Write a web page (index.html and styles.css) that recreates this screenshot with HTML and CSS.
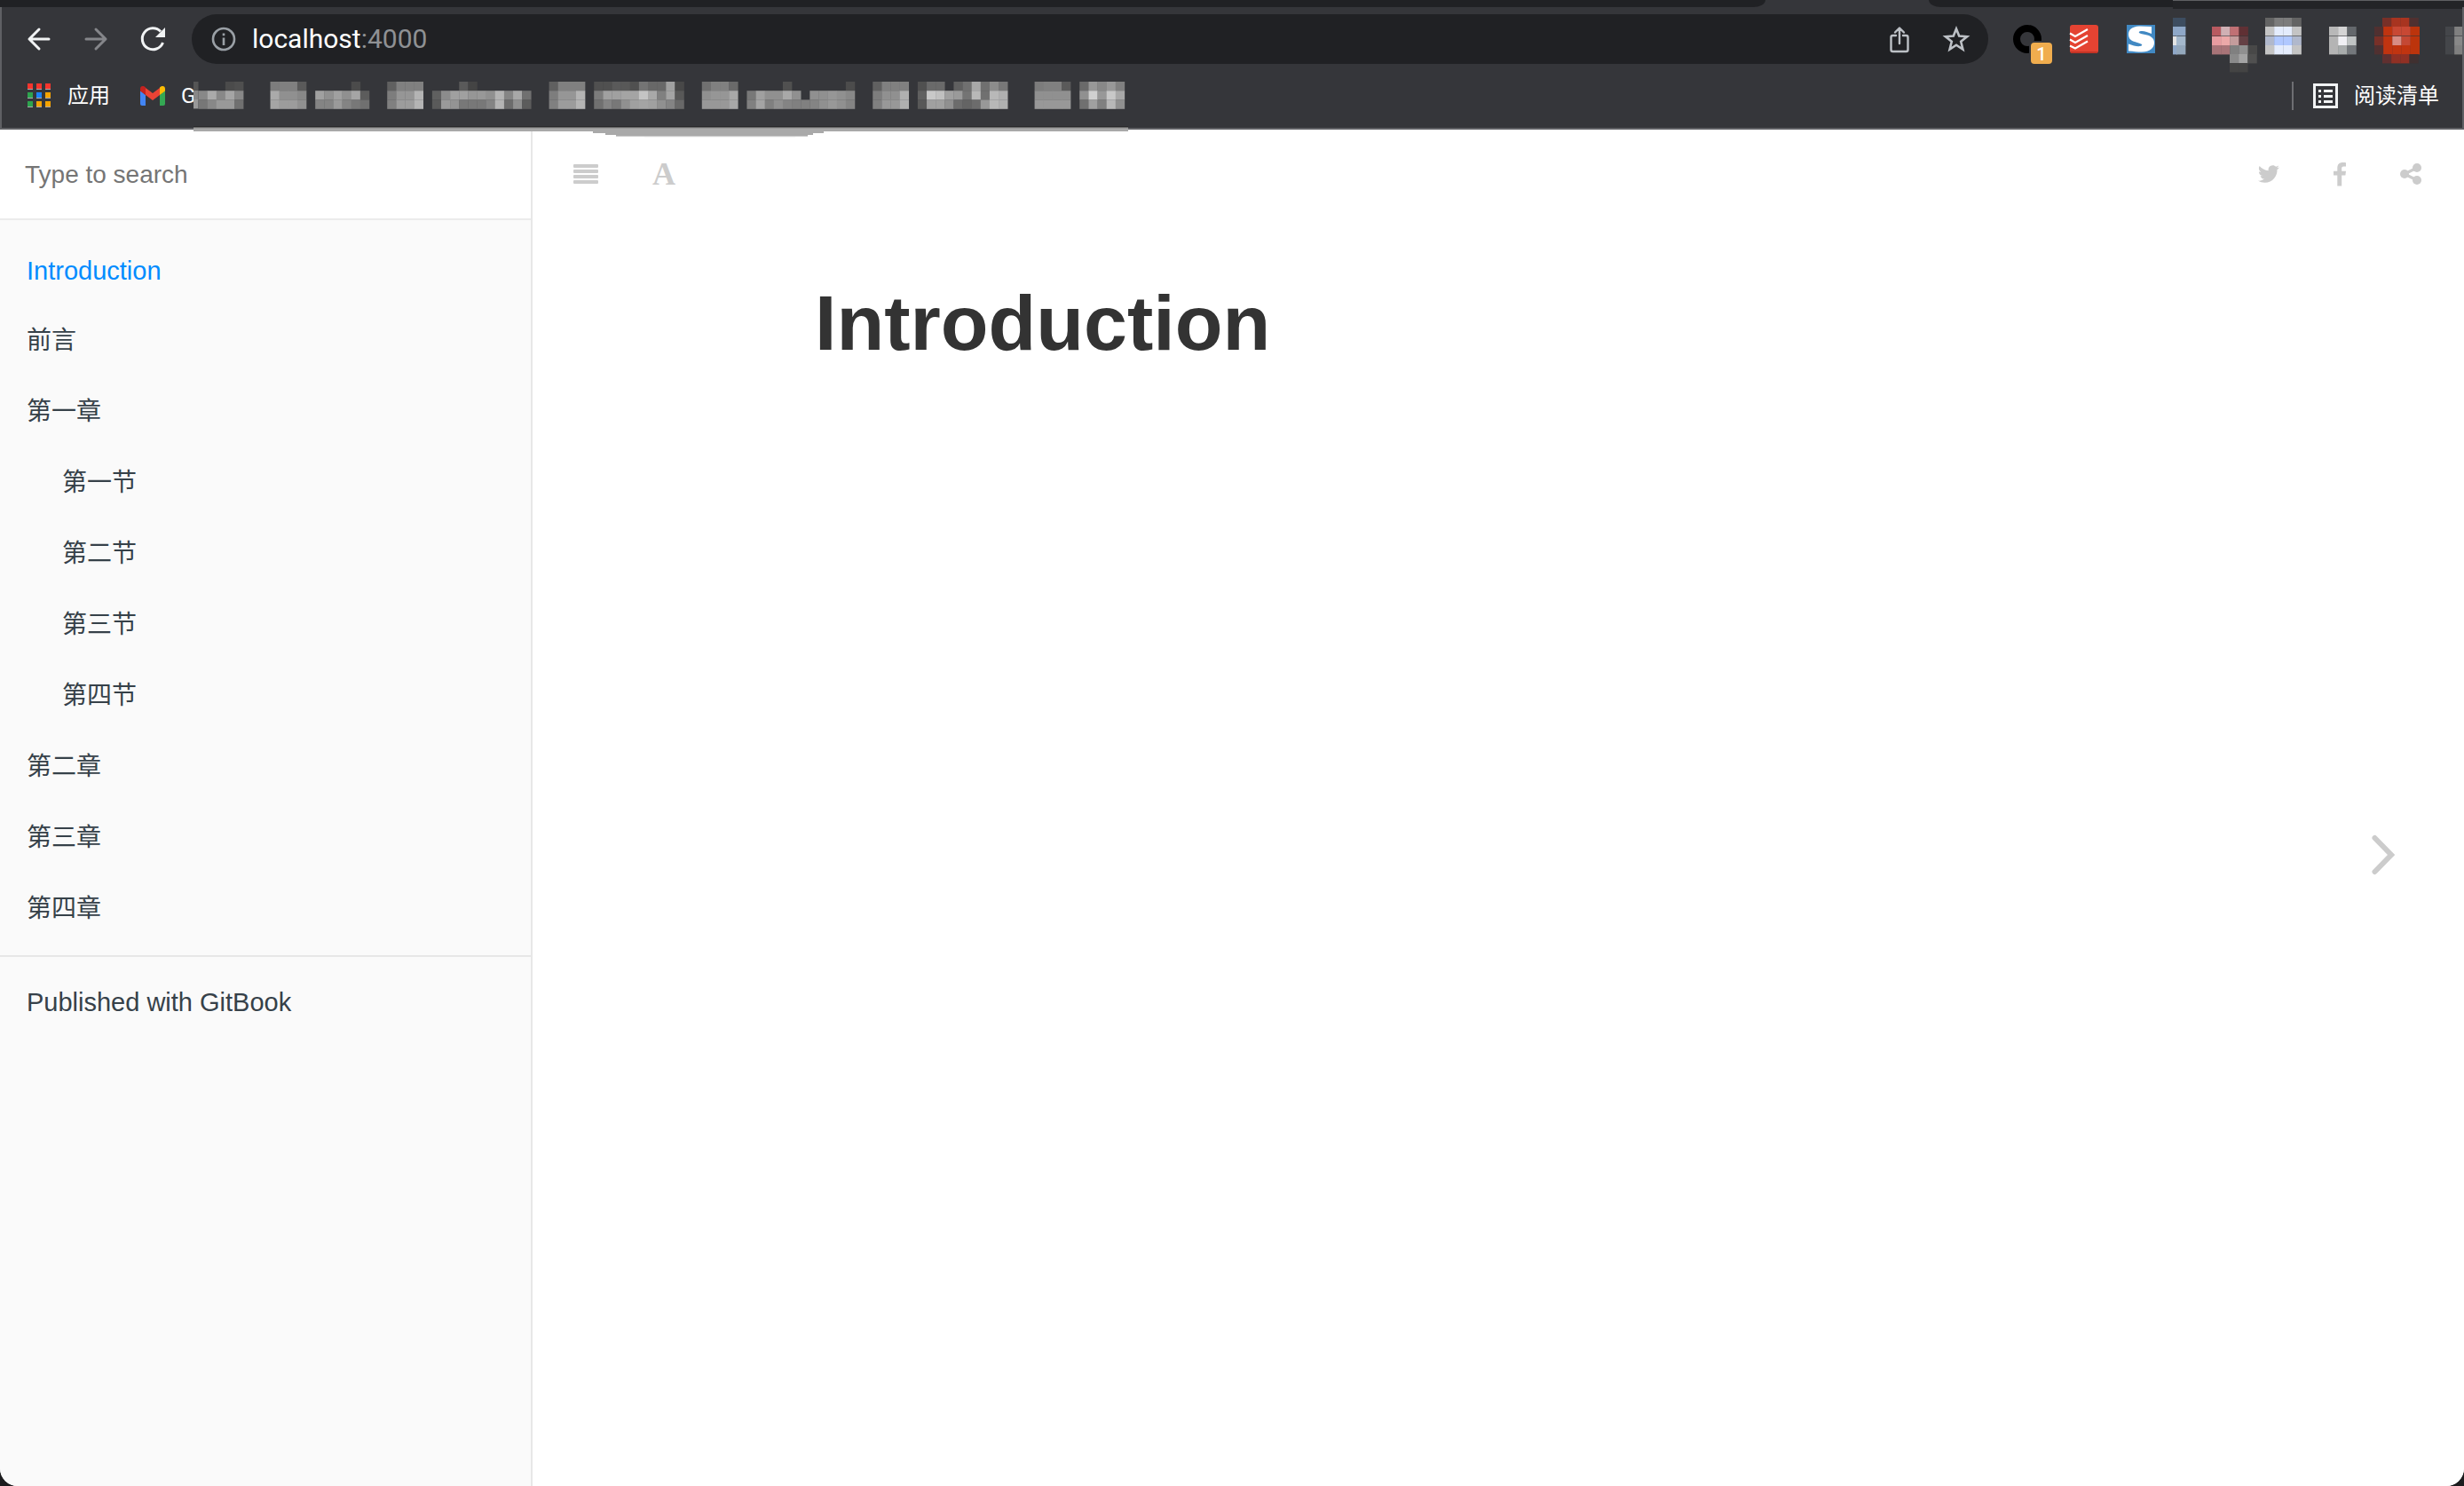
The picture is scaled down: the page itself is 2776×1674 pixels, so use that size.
FILE: index.html
```html
<!DOCTYPE html>
<html lang="zh-CN">
<head>
<meta charset="utf-8">
<meta name="viewport" content="width=device-width, initial-scale=1">
<title>Introduction</title>
<link rel="stylesheet" href="styles.css">
</head>
<body>
<div class="window">
  <header class="browser">
    <div class="tabstrip">
      <div class="tabs-left"></div>
      <div class="tabs-right"><div class="tabs-tail"></div></div>
    </div>
    <div class="chrome">
      <div class="toolbar">
        <button class="tool" aria-label="Back"><svg width="64" height="56" viewBox="0 0 64 56" fill="none" stroke="#f1f3f4" stroke-width="3" stroke-linecap="round" stroke-linejoin="round"><path d="M43 28H21M32 17L21 28l11 11"/></svg></button>
        <button class="tool" aria-label="Forward"><svg width="64" height="56" viewBox="0 0 64 56" fill="none" stroke="#85868a" stroke-width="3" stroke-linecap="round" stroke-linejoin="round"><path d="M21 28h22M32 17l11 11-11 11"/></svg></button>
        <button class="tool" aria-label="Reload"><svg width="64" height="56" viewBox="0 0 64 56"><path d="M43.500 32A12 12 0 1 1 41 19.500" fill="none" stroke="#f1f3f4" stroke-width="3"/><path d="M46 15v11H35z" fill="#f1f3f4"/></svg></button>
        <div class="omnibox">
          <svg class="info" width="28" height="28" viewBox="0 0 28 28"><circle cx="14" cy="14" r="12" fill="none" stroke="#9aa0a6" stroke-width="2.600"/><path d="M12.700 12.500h2.600v8.500h-2.600zM12.700 7.500h2.600v2.800h-2.600z" fill="#9aa0a6"/></svg>
          <a class="url" href="#">localhost<span class="port">:4000</span></a>
          <button class="tool" aria-label="Share"><svg width="64" height="56" viewBox="0 0 64 56" fill="none" stroke="#bdc1c6" stroke-width="2.400" stroke-linecap="round" stroke-linejoin="round"><path d="M28 24h-3.500a2 2 0 0 0-2 2v14a2 2 0 0 0 2 2h15a2 2 0 0 0 2-2V26a2 2 0 0 0-2-2H36M32 33V16M27 20.500L32 15.500l5 5"/></svg></button>
          <button class="tool" aria-label="Bookmark this page"><svg width="64" height="56" viewBox="0 0 64 56" fill="none" stroke="#bdc1c6" stroke-width="2.600"><path d="M32 16.500l3.200 8.100 8.900.6-6.900 5.600 2.200 8.700L32 34.700l-7.400 4.800 2.200-8.700-6.900-5.600 8.900-.6z"/></svg></button>
        </div>
        <div class="extensions">
          <button class="tool ring" aria-label="Extension, 1 notification"><svg width="64" height="56" viewBox="0 0 64 56"><circle cx="32" cy="28" r="12" fill="none" stroke="#000" stroke-width="8"/><path d="M34 30h16v18H34z" fill="#35363a"/></svg><span class="badge">1</span></button>
          <button class="tool" aria-label="Todoist"><svg width="64" height="56" viewBox="0 0 64 56"><rect x="16" y="12" width="32" height="32" rx="3" fill="#e44332"/><path d="M17 43h30" stroke="#c23325" stroke-width="2"/><path d="M16 21.500l6 3.500 14-8M16 28.500l6 3.500 14-8M16 35.500l6 3 14-8" fill="none" stroke="#fff" stroke-width="2.200"/></svg></button>
          <button class="tool" aria-label="S extension"><svg width="64" height="56" viewBox="0 0 64 56"><rect x="16" y="12" width="32" height="32" fill="#4189c3"/><path d="M44 14v8c-4-2-9-3.500-12-3-3 .500-3 2 0 3l7 1.500c5 1.500 8 4 8 8.500 0 6-5 10.500-14 10.500-5 0-9-.5-15-1v-8c5 2 10 3 13 2.500 3-.500 3-2 0-3l-6-2c-5-1.500-7-4-7-8.500 0-5 4-8.500 12-9z" fill="#fff"/></svg></button>
        </div>
        <svg class="ext-mosaic" width="326" height="68" viewBox="2448 16 326 68" aria-hidden="true"></svg>
      </div>
      <nav class="bookmarks" aria-label="Bookmarks">
        <a class="bookmark apps" href="#"><svg width="26" height="28" viewBox="0 0 26 28"><path d="M0 6h6v1H0zM10 6h6v1h-6zM20 6h6v1h-6zM0 16h6v1H0zM10 16h6v1h-6zM20 16h6v1h-6zM0 26h6v1H0zM10 26h6v1h-6zM20 26h6v1h-6z" fill="#aaa"/><path d="M0 0h6v6H0zM10 0h6v6h-6zM20 0h6v6h-6z" fill="#f7352d"/><path d="M0 10h6v6H0zM0 20h6v6H0z" fill="#2da44e"/><path d="M10 10h6v6h-6z" fill="#1a82f7"/><path d="M20 10h6v6h-6zM10 20h6v6h-6zM20 20h6v6h-6z" fill="#f4a300"/></svg>应用</a>
        <a class="bookmark gmail" href="#"><svg width="28" height="22" viewBox="0 0 28 22"><path d="M0 5l6 5v12H2a2 2 0 0 1-2-2z" fill="#4285f4"/><path d="M28 5l-6 5v12h4a2 2 0 0 0 2-2z" fill="#34a853"/><path d="M6 2l8 6 8-6v8l-8 6-8-6z" fill="#ea4335"/><path d="M0 3C0 0 3-1 6 1.500V10L0 5.500z" fill="#c5221f"/><path d="M28 3c0-3-3-4-6-1.500V10l6-4.500z" fill="#fbbc04"/></svg><span class="initial">G</span></a>
        <svg class="mosaic" width="1053" height="32" viewBox="218 92 1053 32" aria-hidden="true"></svg>
        <a class="bookmark reading" href="#"><svg width="28" height="28" viewBox="0 0 28 28"><rect x="1.500" y="1.500" width="25" height="25" fill="none" stroke="#f1f3f4" stroke-width="3"/><path d="M6 7h3v3H6zM12 7h10v3H12zM6 13h3v3H6zM12 13h10v3H12zM6 19h3v3H6zM12 19h10v3H12z" fill="#f1f3f4"/></svg>阅读清单</a>
      </nav>
      <svg class="smudge" width="1053" height="14" viewBox="218 142 1053 14" aria-hidden="true"><path d="M218 142h1053v1H218z" fill="#29292b"/><path d="M218 143h1053v1H218z" fill="#666"/><path d="M218 144h1053v2H218z" fill="#999"/><path d="M218 145h1053v3H928v2h-12v2h-6v1H694v-1h-12v-2h-14v-2H218z" fill="#a9a9a9"/><path d="M694 153h216v1H694z" fill="#ccc"/><path d="M726 154h170v1H726z" fill="#f4f4f4"/></svg>
    </div>
  </header>
  <div class="book">
    <aside class="sidebar">
      <input class="search" type="search" placeholder="Type to search" aria-label="Type to search">
      <nav aria-label="Summary">
        <ul class="summary">
          <li><a class="latin active" href="#">Introduction</a></li>
          <li><a href="#">前言</a></li>
          <li><a href="#">第一章</a>
            <ul>
              <li><a href="#">第一节</a></li>
              <li><a href="#">第二节</a></li>
              <li><a href="#">第三节</a></li>
              <li><a href="#">第四节</a></li>
            </ul>
          </li>
          <li><a href="#">第二章</a></li>
          <li><a href="#">第三章</a></li>
          <li><a href="#">第四章</a></li>
          <li class="divider"></li>
          <li><a class="latin" href="#">Published with GitBook</a></li>
        </ul>
      </nav>
    </aside>
    <main class="body">
      <div class="book-header">
        <button class="action" aria-label="Toggle summary"><svg width="28" height="22" viewBox="0 0 28 22" fill="#ccc"><rect width="28" height="4" rx="1"/><rect y="6" width="28" height="4" rx="1"/><rect y="12" width="28" height="4" rx="1"/><rect y="18" width="28" height="4" rx="1"/></svg></button>
        <button class="action font">A</button>
        <span class="spacer"></span>
        <button class="share" aria-label="Twitter"><svg width="24" height="20" viewBox="0 0 24 20"><path fill="#ccc" d="M24 2.400a10 10 0 0 1-2.500 2.600c.3 7-4.800 14.800-14 14.800-2.700 0-5.300-.8-7.500-2.200 2.600.3 5.200-.5 7.200-2-2.200 0-4-1.500-4.600-3.400.8.100 1.500.1 2.200-.1C2.500 11.600.9 9.600.9 7.200c.7.400 1.400.6 2.200.6C.9 6.300.2 3.400 1.600 1.100 4 4 7.700 6 11.700 6.200 11 3.100 13.300.2 16.500.2c1.400 0 2.700.6 3.600 1.500 1.100-.2 2.200-.6 3.100-1.200-.4 1.100-1.100 2.100-2.100 2.700 1-.1 2-.4 2.900-.8z"/></svg></button>
        <button class="share" aria-label="Facebook"><svg width="16" height="27" viewBox="0 0 16 27"><path fill="#ccc" d="M15 .200v4.200h-2.500c-2 0-2.300 1-2.300 2.300v3H15l-.6 4.700h-4.200V26.500H5.300V14.400H1V9.700h4.300V6.100C5.300 2 7.800 0 11.500 0c1.700 0 3.100.1 3.500.200z"/></svg></button>
        <button class="share" aria-label="Share"><svg width="24" height="24" viewBox="0 0 24 24" fill="#ccc"><circle cx="19" cy="5" r="5"/><circle cx="19" cy="19" r="5"/><circle cx="5" cy="12" r="5"/><path d="M19 5L5 12l14 7" fill="none" stroke="#ccc" stroke-width="3.200"/></svg></button>
      </div>
      <article class="page">
        <h1>Introduction</h1>
      </article>
      <a class="next" href="#" aria-label="Next page"><svg width="26" height="46" viewBox="0 0 26 46"><path d="M3.500 4L22 23 3.500 42" fill="none" stroke="#ccc" stroke-width="6" stroke-linecap="round"/></svg></a>
    </main>
  </div>
</div>
<script src="mosaic.js"></script>
</body>
</html>
```
FILE: mosaic.js
```js
// Pixelated bookmark labels: [first column, top row, middle row, bottom row], two hex digits of grey per cell.
const labels = [
  [0, "......4b4f", "88aa88a588", "7788999970"],
  [8, "7d80805a", "aa909088", "a59c9c90"],
  [13, "........4b..", "a090a090a55c", "84849a847870"],
  [21, "60808080", "7d9696b4", "809c9cb4"],
  [26, "......5a44............", "608ca0a0969890b485a870", "5a9a9478787884b46c905c"],
  [39, "60808080", "7d9696b4", "809c9cb4"],
  [44, "50505a5850746868a048", "7ca0a0a4a4c4a880a458", "70847890a0a4a0908468"],
  [56, "7080806a", "909696a8", "989898a8"],
  [61, "........50............4c", "78a09090a890..9090969088", "80a480908480808490989084"],
  [75, "60808080", "7d9090b0", "809898b0"],
  [80, "506a6a..6070a8708c78", "60c8c0a09a74b870b8b0", "58a0a0906c646c98b8b0"],
  [93, "7c80805a", "90909090", "98989898"],
  [98, "6a98889880", "90d098c8a8", "70a080b890"]
];

// Pixelated extension icons: [x, y, colour per cell].
const extensions = [
  [2452, 20, "3d4d60"], [2452, 30, "8fa8c8"], [2452, 41, "a4b8cc"], [2452, 51, "94a8bc"],
  [2492, 30, "b85a60 d0b0b4 c07074 603034"], [2492, 41, "e89ca0 eca8a8 c49c9c 644044"], [2492, 51, "a87478 a87478 808080 909090 484848"], [2512, 61, "8a8a8a a4a4a4 505050"], [2512, 71, "444444 444444"],
  [2552, 20, "646464 7c7c7c 7c7c7c 646464"], [2552, 30, "c4c4c4 e4ecfc e4ecfc c4c4c4"], [2552, 41, "b0b8cc b0c8ff b0c8ff b0b8cc"], [2552, 51, "c4c4c4 e4ecfc e4ecfc c4c4c4"],
  [2624, 30, "b8b8b8 d4d4d4 64686c"], [2624, 41, "b4b4b4 f0f0f4 c0c4c4"], [2624, 51, "b4b4b4 a8acac 74787c"],
  [2684, 20, "783028 a83420 a83420 503030"], [2675, 30, "503030 c03410 c84834 c84834 bc340c"], [2675, 41, "783028 c03410 d88c84 c44834 bc340c"], [2675, 51, "503030 c03410 c03410 c03410 bc340c"], [2684, 61, "603030 903024 903024 403030"],
  [2755, 30, "44464a 808080"], [2755, 41, "44464a 888888"], [2755, 51, "44464a 808080"]
];

function cell(svg, x, y, w, fill) {
  const r = document.createElementNS("http://www.w3.org/2000/svg", "rect");
  const attrs = { x, y, width: w, height: 10.4, fill };
  for (const k in attrs) r.setAttribute(k, attrs[k]);
  svg.append(r);
}

const marks = document.querySelector(".mosaic");
cell(marks, 218, 92, 5.5, "#555");
cell(marks, 218, 102, 5.5, "#888");
cell(marks, 218, 112, 5.5, "#999");
for (const [col, ...rows] of labels) {
  rows.forEach((row, j) => {
    for (let i = 0; i * 2 < row.length; i++) {
      const g = row.slice(i * 2, i * 2 + 2);
      if (g !== "..") cell(marks, 223.5 + 10.13 * (col + i), 92 + 10.2 * j, 10.4, "#" + g + g + g);
    }
  });
}

const ext = document.querySelector(".ext-mosaic");
for (const y of [20, 30, 41, 51]) cell(ext, 2448, y, 5, y === 41 ? "#e4e4e4" : y === 20 ? "#3d4d60" : "#8fa8c8");
for (const [x, y, colours] of extensions) {
  colours.split(" ").forEach((c, i) => cell(ext, x + 10.15 * i, y, 10.4, "#" + c));
}
```
FILE: styles.css
```css
* {
  box-sizing: border-box;
}

html {
  background: #1c1c1e;
}

body {
  margin: 0;
  font-family: "Liberation Sans", "Noto Sans CJK SC", sans-serif;
  font-size: 28px;
}

a {
  color: inherit;
  text-decoration: none;
}

button {
  margin: 0;
  padding: 0;
  border: 0;
  background: none;
  font: inherit;
  cursor: pointer;
}

svg {
  display: block;
  flex: none;
}

.window {
  display: flex;
  flex-direction: column;
  min-height: 100vh;
  overflow: hidden;
  border-radius: 0 0 20px 20px;
  background: #fff;
}

/* Browser frame */
.browser {
  background: #35363a;
  color: #fff;
  font-family: Roboto, "Noto Sans CJK SC", sans-serif;
}

.tabstrip {
  display: flex;
  gap: 184px;
  height: 8px;
}

.tabs-left {
  flex: 1;
  border-bottom-right-radius: 14px 8px;
  background: #202124;
}

.tabs-right {
  display: flex;
  justify-content: flex-end;
  width: 603px;
  border-bottom-left-radius: 14px 8px;
  background: #202124;
}

.tabs-tail {
  width: 328px;
  height: 10px;
  border-top: 1px solid #5f6063;
  background: #232427;
}

.chrome {
  position: relative;
  border: 2px solid #5f6064;
  border-top: 0;
}

.toolbar {
  display: flex;
  align-items: flex-start;
  height: 76px;
  padding: 8px 0 0 10px;
}

.tool {
  height: 56px;
}

.omnibox {
  display: flex;
  flex: 1;
  align-items: center;
  height: 56px;
  margin: 0 12px;
  padding: 0 4px 0 22px;
  border-radius: 28px;
  background: #202124;
}

.url {
  flex: 1;
  margin-left: 18px;
  font-size: 30px;
  line-height: 56px;
}

.port {
  color: #8f9194;
}

.extensions {
  display: flex;
  margin-right: 4px;
}

.ring {
  position: relative;
}

.badge {
  position: absolute;
  left: 36px;
  top: 32px;
  width: 24px;
  height: 24px;
  border-radius: 4px;
  background: #f0ad4e;
  color: #fff;
  font-size: 20px;
  font-weight: 500;
  line-height: 26px;
  text-align: center;
}

.bookmarks {
  display: flex;
  align-items: center;
  height: 60px;
  padding: 0 26px 12px 29px;
}

.bookmark {
  display: flex;
  align-items: center;
  font-size: 24px;
  line-height: 32px;
}

.apps {
  gap: 19px;
}

.gmail {
  gap: 18px;
  margin-left: 34px;
}

.initial {
  width: 14px;
}

.reading {
  gap: 18px;
  height: 32px;
  margin-left: auto;
  padding-left: 22px;
  border-left: 2px solid #6d6e72;
}

.smudge {
  position: absolute;
  top: 134px;
  left: 216px;
  z-index: 1;
}

/* Book */
.book {
  display: flex;
  flex: 1;
}

.sidebar {
  width: 600px;
  border-right: 2px solid #e7e7e7;
  background: #fafafa;
  color: #364149;
}

.search {
  display: block;
  width: 100%;
  height: 102px;
  padding: 2px 28px 0;
  border: 0;
  border-bottom: 2px solid #ebebeb;
  border-radius: 0;
  outline: 0;
  background: #fff;
  font: inherit;
  appearance: none;
}

.search::placeholder {
  color: #757575;
}

.summary,
.summary ul {
  margin: 0;
  padding: 0;
  list-style: none;
}

.summary {
  padding-top: 20px;
}

.summary ul {
  padding-left: 40px;
}

.summary a {
  display: block;
  padding: 22px 30px 18px;
  line-height: 40px;
}

.summary .latin {
  padding: 20px 30px;
  font-size: 29px;
  line-height: 34px;
}

.summary .active {
  color: #008cff;
}

.divider {
  height: 2px;
  margin: 14px 0;
  background: #e7e7e7;
}

.body {
  position: relative;
  flex: 1;
  background: #fff;
}

.book-header {
  display: flex;
  align-items: center;
  height: 100px;
  padding: 0 20px 0 16px;
}

.action {
  display: grid;
  place-items: center;
  width: 88px;
  height: 100px;
}

.font {
  color: #ccc;
  font-family: "Liberation Serif", serif;
  font-size: 36px;
  font-weight: 700;
}

.share {
  display: grid;
  place-items: center;
  width: 80px;
  height: 100px;
}

.spacer {
  flex: 1;
}

.page {
  max-width: 1600px;
  margin: 0 auto;
  padding: 70px 30px;
}

h1 {
  margin: 0;
  color: #333;
  font-size: 88px;
  line-height: 96px;
}

.next {
  position: absolute;
  top: 106px;
  right: 0;
  bottom: 0;
  display: grid;
  place-items: center;
  width: 182px;
}
```
